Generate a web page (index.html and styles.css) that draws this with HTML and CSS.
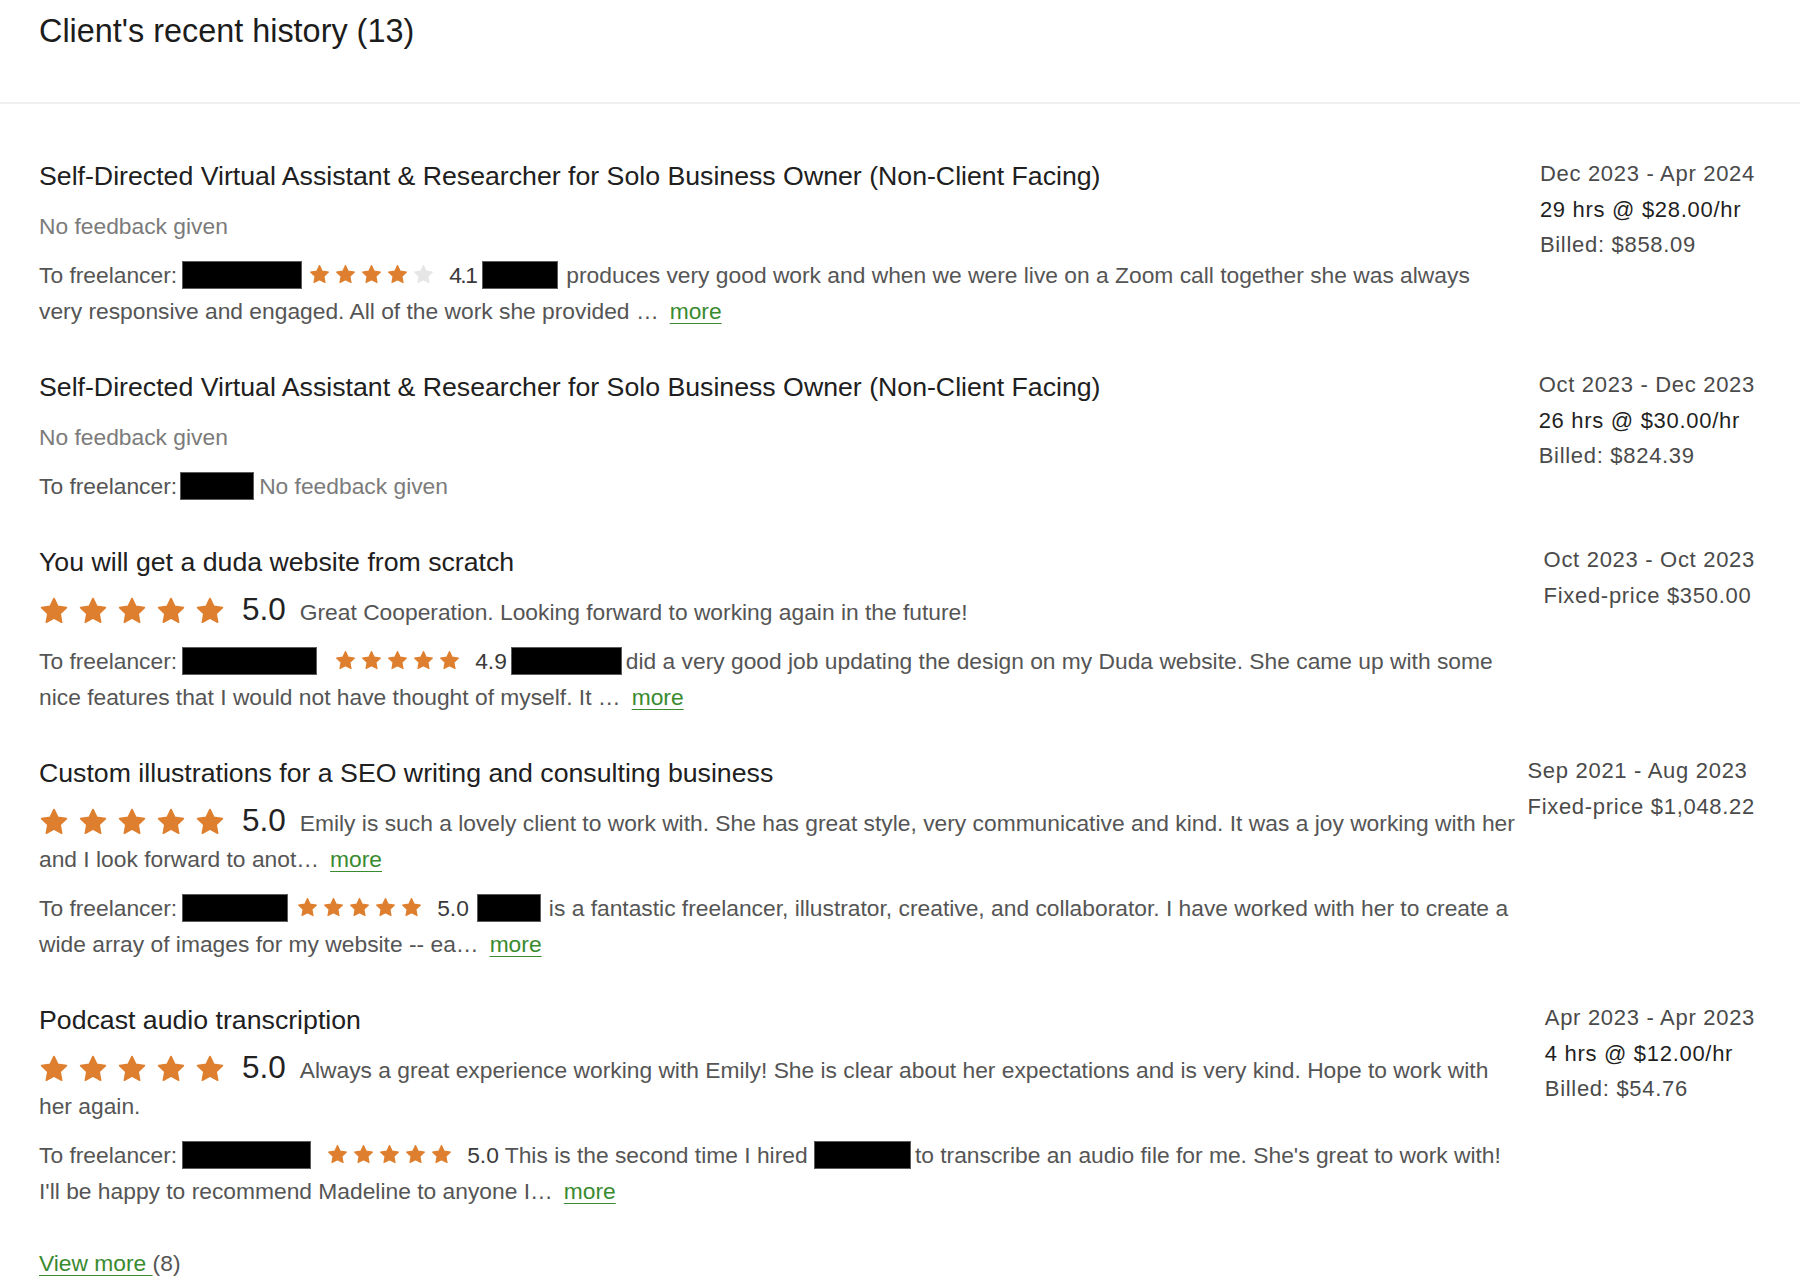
FILE: index.html
```html
<!DOCTYPE html>
<html lang="en">
<head>
<meta charset="utf-8">
<title>Client's recent history</title>
<link rel="stylesheet" href="styles.css">
</head>
<body>
<svg class="defs" width="0" height="0" aria-hidden="true">
  <defs>
    <symbol id="star" viewBox="0 0 24 24">
      <path d="M12 2.6l2.85 5.95 6.45.9-4.7 4.55 1.15 6.45L12 17.35l-5.75 3.1 1.15-6.45-4.7-4.55 6.45-.9z" stroke-linejoin="round"/>
    </symbol>
  </defs>
</svg>

<div class="page">
  <header class="head">
    <h2 class="head-title">Client's recent history (13)</h2>
  </header>

  <section class="list">
    <!-- Row 1 -->
    <article class="item">
      <div class="main">
        <div class="job-title">Self-Directed Virtual Assistant &amp; Researcher for Solo Business Owner (Non-Client Facing)</div>
        <div class="para nofb">No feedback given</div>
        <p class="para fb"><span class="tf">To freelancer:</span><span class="rd w120"></span><span class="stars-sm g6"><svg class="s on"><use href="#star"/></svg><svg class="s on"><use href="#star"/></svg><svg class="s on"><use href="#star"/></svg><svg class="s on"><use href="#star"/></svg><svg class="s off"><use href="#star"/></svg></span><span class="rate r1">4.1</span><span class="rd w76 ml0 mr8"></span>produces very good work and when we were live on a Zoom call together she was always very responsive and engaged. All of the work she provided …<a class="more" href="#">more</a></p>
      </div>
      <div class="meta">
        <div>Dec 2023 - Apr 2024</div>
        <div class="dark">29 hrs @ $28.00/hr</div>
        <div>Billed: $858.09</div>
      </div>
    </article>

    <!-- Row 2 -->
    <article class="item">
      <div class="main">
        <div class="job-title">Self-Directed Virtual Assistant &amp; Researcher for Solo Business Owner (Non-Client Facing)</div>
        <div class="para nofb">No feedback given</div>
        <p class="para fb"><span class="tf">To freelancer:</span><span class="rd w74 mr5 tight"></span><span class="nofb">No feedback given</span></p>
      </div>
      <div class="meta">
        <div>Oct 2023 - Dec 2023</div>
        <div class="dark">26 hrs @ $30.00/hr</div>
        <div>Billed: $824.39</div>
      </div>
    </article>

    <!-- Row 3 -->
    <article class="item">
      <div class="main">
        <div class="job-title">You will get a duda website from scratch</div>
        <p class="para review"><span class="stars-lg"><svg class="l on"><use href="#star"/></svg><svg class="l on"><use href="#star"/></svg><svg class="l on"><use href="#star"/></svg><svg class="l on"><use href="#star"/></svg><svg class="l on"><use href="#star"/></svg></span><span class="big-rate">5.0</span>Great Cooperation. Looking forward to working again in the future!</p>
        <p class="para fb"><span class="tf">To freelancer:</span><span class="rd w135"></span><span class="stars-sm g17"><svg class="s on"><use href="#star"/></svg><svg class="s on"><use href="#star"/></svg><svg class="s on"><use href="#star"/></svg><svg class="s on"><use href="#star"/></svg><svg class="s on"><use href="#star"/></svg></span><span class="rate r4">4.9</span><span class="rd w111 ml0 mr4"></span>did a very good job updating the design on my Duda website. She came up with some nice features that I would not have thought of myself. It …<a class="more" href="#">more</a></p>
      </div>
      <div class="meta">
        <div>Oct 2023 - Oct 2023</div>
        <div>Fixed-price $350.00</div>
      </div>
    </article>

    <!-- Row 4 -->
    <article class="item">
      <div class="main">
        <div class="job-title">Custom illustrations for a SEO writing and consulting business</div>
        <p class="para review"><span class="stars-lg"><svg class="l on"><use href="#star"/></svg><svg class="l on"><use href="#star"/></svg><svg class="l on"><use href="#star"/></svg><svg class="l on"><use href="#star"/></svg><svg class="l on"><use href="#star"/></svg></span><span class="big-rate">5.0</span>Emily is such a lovely client to work with. She has great style, very communicative and kind. It was a joy working with her and I look forward to anot…<a class="more" href="#">more</a></p>
        <p class="para fb"><span class="tf">To freelancer:</span><span class="rd w106"></span><span class="stars-sm g8"><svg class="s on"><use href="#star"/></svg><svg class="s on"><use href="#star"/></svg><svg class="s on"><use href="#star"/></svg><svg class="s on"><use href="#star"/></svg><svg class="s on"><use href="#star"/></svg></span><span class="rate r8">5.0</span><span class="rd w64 ml0 mr8"></span>is a fantastic freelancer, illustrator, creative, and collaborator. I have worked with her to create a wide array of images for my website -- ea…<a class="more" href="#">more</a></p>
      </div>
      <div class="meta">
        <div>Sep 2021 - Aug 2023</div>
        <div>Fixed-price $1,048.22</div>
      </div>
    </article>

    <!-- Row 5 -->
    <article class="item">
      <div class="main">
        <div class="job-title">Podcast audio transcription</div>
        <p class="para review"><span class="stars-lg"><svg class="l on"><use href="#star"/></svg><svg class="l on"><use href="#star"/></svg><svg class="l on"><use href="#star"/></svg><svg class="l on"><use href="#star"/></svg><svg class="l on"><use href="#star"/></svg></span><span class="big-rate">5.0</span>Always a great experience working with Emily! She is clear about her expectations and is very kind. Hope to work with her again.</p>
        <p class="para fb"><span class="tf">To freelancer:</span><span class="rd w129"></span><span class="stars-sm g15"><svg class="s on"><use href="#star"/></svg><svg class="s on"><use href="#star"/></svg><svg class="s on"><use href="#star"/></svg><svg class="s on"><use href="#star"/></svg><svg class="s on"><use href="#star"/></svg></span><span class="rate r0">5.0</span> This is the second time I hired <span class="rd w97 ml0 mr4"></span>to transcribe an audio file for me. She's great to work with! I'll be happy to recommend Madeline to anyone I…<a class="more" href="#">more</a></p>
      </div>
      <div class="meta">
        <div>Apr 2023 - Apr 2023</div>
        <div class="dark">4 hrs @ $12.00/hr</div>
        <div>Billed: $54.76</div>
      </div>
    </article>

    <div class="view-more"><a class="vm-link" href="#">View more </a><span class="vm-count">(8)</span></div>
  </section>
</div>
</body>
</html>
```

FILE: styles.css
```css
* { box-sizing: border-box; }

html, body {
  margin: 0;
  padding: 0;
  background: #ffffff;
}

body {
  font-family: "Liberation Sans", Arial, Helvetica, sans-serif;
  color: #555555;
}

.defs {
  position: absolute;
  width: 0;
  height: 0;
  overflow: hidden;
}

.page {
  width: 1800px;
}

.head {
  padding: 11px 39px 0;
  height: 104px;
  border-bottom: 2px solid #efefef;
}

.head-title {
  margin: 0;
  font-size: 32.4px;
  line-height: 40px;
  font-weight: 400;
  color: #1c1c1c;
}

.list {
  padding: 54px 45px 0 39px;
}

.item {
  display: flex;
  align-items: flex-start;
  margin-bottom: 40px;
}

.main {
  flex: none;
  width: 1478px;
}

.job-title {
  font-size: 26.7px;
  line-height: 36px;
  color: #202020;
}

.para {
  margin: 14px 0 0;
  font-size: 22.8px;
  line-height: 36px;
  color: #555555;
}

.para + .para {
  margin-top: 13px;
}

.nofb {
  color: #7b7b7b;
}

.tf {
  color: #555555;
}

/* redaction boxes */
.rd {
  display: inline-block;
  height: 28px;
  vertical-align: -6px;
  background: #000;
  border: 1px solid #5c5c5c;
  margin-left: 5px;
}
.rd.tight { margin-left: 3px; }
.rd.ml0 { margin-left: 0; }
.w64 { width: 64px; }
.w74 { width: 74px; }
.w76 { width: 76px; }
.w97 { width: 97px; }
.w106 { width: 106px; }
.w111 { width: 111px; }
.w120 { width: 120px; }
.w129 { width: 129px; }
.w135 { width: 135px; }
.mr4 { margin-right: 4px; }
.mr5 { margin-right: 5px; }
.mr8 { margin-right: 8px; }

/* stars */
.stars-sm {
  display: inline-flex;
  gap: 3px;
  vertical-align: -3px;
}
.g6 { margin-left: 6px; }
.g8 { margin-left: 8px; }
.g15 { margin-left: 15px; }
.g17 { margin-left: 17px; }

.s {
  width: 23px;
  height: 23px;
}

.stars-lg {
  display: inline-flex;
  gap: 7px;
  vertical-align: -7px;
  margin-left: -1px;
}

.l {
  width: 32px;
  height: 32px;
}

.on {
  fill: #de7f2f;
  stroke: #de7f2f;
  stroke-width: 1.2;
}

.off {
  fill: #e6e6e6;
  stroke: #e6e6e6;
  stroke-width: 1.2;
}

.rate {
  margin-left: 14px;
  color: #3a3a3a;
}
.rate.r0 { margin-right: 0; }
.rate.r1 { margin-right: 6px; letter-spacing: -1.5px; }
.rate.r4 { margin-right: 4px; }
.rate.r8 { margin-right: 8px; }

.big-rate {
  margin-left: 16px;
  margin-right: 14px;
  font-size: 31.5px;
  line-height: 0;
  color: #222222;
}

.more {
  margin-left: 11px;
  color: #3a8a30;
  text-decoration: underline;
  text-underline-offset: 4px;
  text-decoration-thickness: 1px;
}

/* meta column */
.meta {
  margin-left: auto;
  margin-top: -2px;
  font-size: 22px;
  letter-spacing: 0.7px;
  line-height: 35.5px;
  color: #4a4a4a;
  white-space: nowrap;
}

.meta .dark {
  color: #1f1f1f;
}

.view-more {
  margin-top: -4px;
  font-size: 22.8px;
  line-height: 36px;
  color: #555555;
}

.vm-link {
  color: #3a8a30;
  text-decoration: underline;
  text-underline-offset: 4px;
  text-decoration-thickness: 1px;
}
```
